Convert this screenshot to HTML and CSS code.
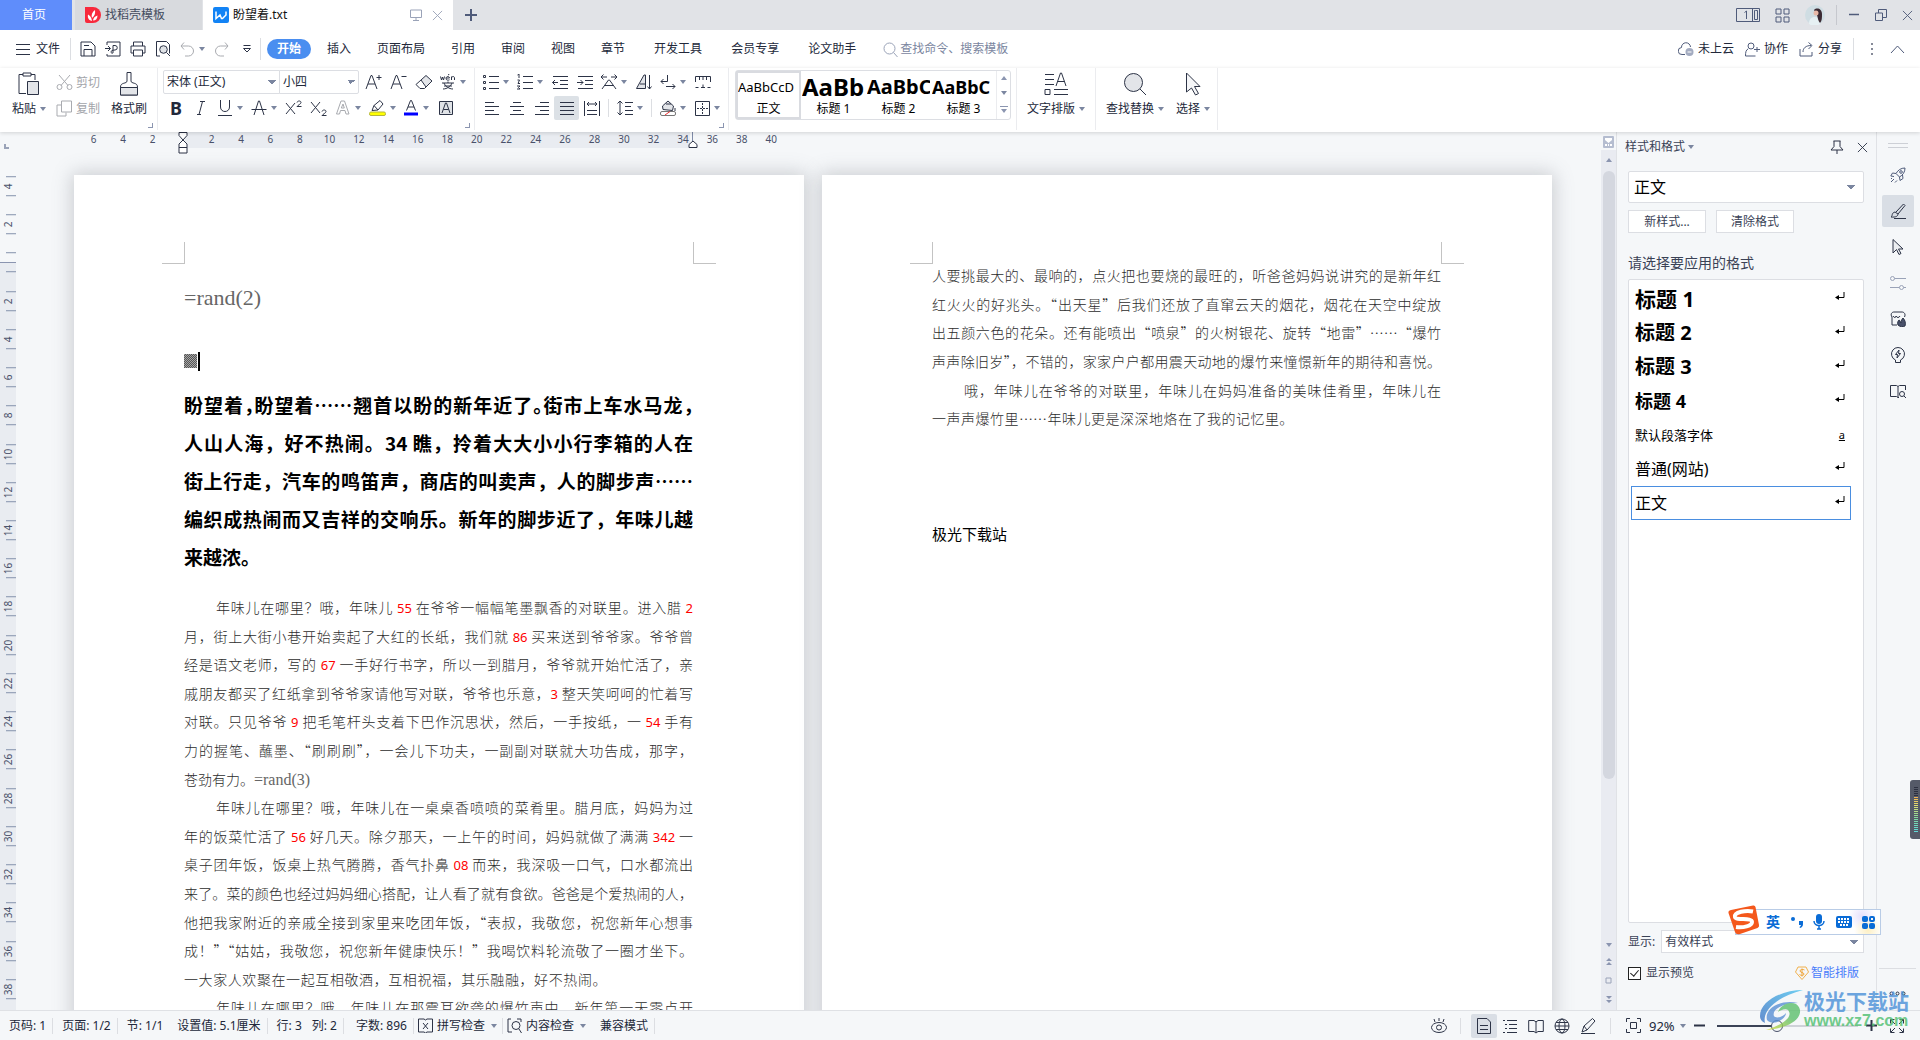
FILE: index.html
```html
<!DOCTYPE html>
<html lang="zh-CN">
<head>
<meta charset="utf-8">
<title>盼望着.txt</title>
<link rel="stylesheet" href="styles.css">
</head>
<body>
<svg class="defs" aria-hidden="true">
  <symbol id="i-close" viewBox="0 0 12 12"><path d="M1 1l10 10M11 1L1 11"/></symbol>
  <symbol id="i-arrow" viewBox="0 0 16 16"><path d="M3 .5v13.500l3.500-3.500 2.500 5 2-1-2.500-4.500H13z" fill="#eceef1"/></symbol>
  <symbol id="i-enter" viewBox="0 0 10 8"><path d="M9 0v5.500H2" /><path d="M4 3L0 5.500 4 8z" fill="#000" stroke="none"/></symbol>
  <symbol id="i-book" viewBox="0 0 16 16"><path d="M8 3v11M.7 2.500H6L8 4l2-1.500h5.300v11H10L8 15l-2-1.500H.7z"/></symbol>
</svg>
<div class="app">
  <header class="titlebar">
    <button class="tab home">首页</button>
    <button class="tab template">
      <svg width="16" height="16" viewBox="0 0 16 16"><path d="M0 0h8a8 8 0 0 1 0 16H2a2 2 0 0 1-2-2z" fill="#f8293c"/><path d="M7 14c-4-1-4.500-4-4-6.500C5 8.500 6.500 10 7 14zM7 11c-1-3 0-6 3-8 .5 3-.2 6-3 8zM8 13.500c.3-2.500 2-4.500 4.500-5 0 3-1.500 5-4.500 5z" fill="#fff"/></svg>
      找稻壳模板</button>
    <button class="tab doc">
      <svg width="16" height="16" viewBox="0 0 16 16"><rect width="16" height="16" rx="2" fill="#1283f5"/><path d="M3 4.500v7l4-3.500 1.500 3.500h1L13 8V4.500" fill="none" stroke="#fff" stroke-width="1.500"/></svg>
      <span class="tab-name">盼望着.txt</span>
      <svg class="ico pale" width="12" height="12" viewBox="0 0 12 12"><path d="M.5 1h11v7.500H.5zM6 8.500V11M3 11.500h6"/></svg>
      <svg class="ico pale" width="11" height="11"><use href="#i-close"/></svg>
    </button>
    <button class="newtab" aria-label="新建"><svg class="ico" width="12" height="12" viewBox="0 0 12 12"><path d="M6 0v12M0 6h12" stroke-width="2"/></svg></button>
    <div class="window-tools">
      <svg class="ico slate" width="24" height="14" viewBox="0 0 24 14"><path d="M.5.5h23v13H.5zM16.500.5v13M19.500 2.500h-1v9h3v-9zM8.500 4.500l2-1.500v8"/></svg>
      <svg class="ico slate" width="15" height="15" viewBox="0 0 15 15"><path d="M1 1h5v5H1zM9 1h5v5H9zM1 9h5v5H1zM9 9h5v5H9z"/></svg>
      <svg width="20" height="20" viewBox="0 0 20 20"><circle cx="10" cy="10" r="10" fill="#cfdde3"/><path d="M4 19c0-6 3-7 6-7s5 2 5 7a10 10 0 0 1-11 0z" fill="#e6f0f3"/><path d="M9 5c3-3 8-1 8 4 0 4 0 7-2 9-2-2-2-5-3-8z" fill="#3b2a33"/><circle cx="11" cy="8" r="2.500" fill="#e8b9a8"/></svg>
      <i class="vline"></i>
      <svg class="ico slate" width="12" height="12" viewBox="0 0 12 12"><path d="M1 5.500h10" stroke-width="1.500"/></svg>
      <svg class="ico slate" width="12" height="12" viewBox="0 0 12 12"><path d="M.5 4h7v7.500h-7zM3.500 4V.5h8v8h-4"/></svg>
      <svg class="ico slate" width="11" height="11"><use href="#i-close"/></svg>
    </div>
  </header>

  <nav class="menubar">
    <button class="file"><svg class="ico" width="14" height="11" viewBox="0 0 14 11"><path d="M0 .5h14M0 5.500h14M0 10.500h14"/></svg>文件</button>
    <i class="vline"></i>
    <div class="quick">
      <button class="tool" aria-label="保存"><svg class="ico" width="16" height="16" viewBox="0 0 16 16"><path d="M1 1h10l4 4v10H1zM4 15V8.500h8V15M4 4.500h5"/></svg></button>
      <button class="tool" aria-label="输出为PDF"><svg class="ico" width="16" height="16" viewBox="0 0 16 16"><path d="M2 4V1h13v14H2v-2M0 7.500h5M3 5l2.500 2.500L3 10M8 12V4.500h2a2 2 0 0 1 0 4.500C7 9 6 10 6 11s1 1.500 2 1"/></svg></button>
      <button class="tool" aria-label="打印"><svg class="ico" width="16" height="16" viewBox="0 0 16 16"><path d="M3.500 5V1h9v4M3.500 12H1V5h14v7h-2.500M3.500 9h9v6h-9z"/></svg></button>
      <button class="tool" aria-label="打印预览"><svg class="ico" width="16" height="16" viewBox="0 0 16 16"><path d="M5 15H1.500V.5h10l3 3v9M11.500 11.500L15 15"/><circle cx="8.500" cy="8.500" r="3.800" fill="#e0e3e7"/></svg></button>
      <button class="tool wide off" aria-label="撤销"><svg class="ico" width="16" height="16" viewBox="0 0 16 16"><path d="M5 1.500L2 5l3 3.500M2 5h7.500a5 5 0 0 1 0 10H6"/></svg><b class="caret"></b></button>
      <button class="tool off" aria-label="恢复"><svg class="ico" width="16" height="16" viewBox="0 0 16 16"><path d="M11 1.500L14 5l-3 3.500M14 5H6.500a5 5 0 0 0 0 10H10"/></svg></button>
      <button class="tool" aria-label="更多"><svg class="ico" width="10" height="8" viewBox="0 0 10 8"><path d="M1.500 .5h7M1.500 3.500h7L5 7z"/></svg></button>
    </div>
    <i class="vline"></i>
    <div class="menu-tabs">
      <button class="current">开始</button><button>插入</button><button>页面布局</button><button>引用</button><button>审阅</button><button>视图</button><button>章节</button>
    </div>
    <div class="menu-tabs extra"><button>开发工具</button><button>会员专享</button><button>论文助手</button></div>
    <label class="search"><svg class="ico pale" width="15" height="15" viewBox="0 0 15 15"><circle cx="6.500" cy="6.500" r="5.500"/><path d="M10.500 10.500L14.500 15"/></svg><input type="text" placeholder="查找命令、搜索模板" aria-label="查找命令"></label>
    <div class="share">
      <button><svg class="ico slate" width="16" height="16" viewBox="0 0 16 16"><path d="M7 13.500H4a3.500 3.500 0 0 1-.5-7 4.500 4.500 0 0 1 9-.5"/><circle cx="11.500" cy="11" r="4" fill="#a3abc0" stroke="none"/><path d="M9.500 11h4" stroke="#fff"/></svg>未上云</button>
      <button><svg class="ico slate" width="15" height="15" viewBox="0 0 15 15"><circle cx="6" cy="4" r="3"/><path d="M3 7C1 8 .5 10 .5 14h10M9 7.500h6M12 5v5"/></svg>协作</button>
      <button><svg class="ico slate" width="15" height="15" viewBox="0 0 15 15"><path d="M1 7v7h12v-4M4 10c0-4 3-6.500 8-6.500M9.500.5L13 3.500 9.500 7"/></svg>分享</button>
      <i class="vline"></i>
      <svg width="3" height="12" viewBox="0 0 3 12"><path d="M0 0h2v2H0zM0 5h2v2H0zM0 10h2v2H0z" fill="#868a98"/></svg>
      <svg class="ico slate" width="15" height="9" viewBox="0 0 15 9"><path d="M1 8l6.500-7L14 8"/></svg>
    </div>
  </nav>

  <section class="ribbon">
    <div class="group clip">
      <button class="big"><svg class="ico" width="22" height="24" viewBox="0 0 22 24"><path d="M8 21.500H1V2.500h4M13 2.500h4V8M5 1h8v3H5z"/><path d="M9.500 9.500h11v13h-11z" fill="#e3e5e9"/></svg><span>粘贴<b class="caret"></b></span></button>
      <div class="stack off">
        <button><svg class="ico" width="17" height="17" viewBox="0 0 17 17"><path d="M3 1l9 10.500M14 1L5 11.500"/><circle cx="3.500" cy="13" r="2.500"/><circle cx="13.500" cy="13" r="2.500"/></svg>剪切</button>
        <button><svg class="ico" width="17" height="17" viewBox="0 0 17 17"><path d="M5.500 1h10v11h-10zM5 5H1v11h9v-3.500"/></svg>复制</button>
      </div>
      <button class="big"><svg class="ico" width="20" height="24" viewBox="0 0 20 24"><path d="M8 .5h4V9c0 3 6.500 1 6.500 6v8h-17v-8C1.500 10 8 12 8 9z"/><path d="M1.500 15.500h17v7.500h-17z" fill="#e3e5e9"/></svg><span>格式刷</span></button>
      <i class="corner"></i>
    </div>
    <div class="group font">
      <div class="tools">
        <select class="family" aria-label="字体"><option>宋体 (正文)</option></select><select class="size" aria-label="字号"><option>小四</option></select>
        <span class="combo-gap"></span>
        <button class="tool" aria-label="增大字号"><svg class="ico" width="17" height="16" viewBox="0 0 17 16"><path d="M1 15L6 1.500h1L12 15M3 10h7M11.500 3.500h5M14 1v5"/></svg></button>
        <button class="tool" aria-label="减小字号"><svg class="ico" width="17" height="16" viewBox="0 0 17 16"><path d="M1 15L6 1.500h1L12 15M3 10h7M11.500 2.500h5"/></svg></button>
        <button class="tool" aria-label="清除格式"><svg class="ico" width="18" height="16" viewBox="0 0 18 16"><path d="M6 6l5-4.500 6 5.500-6 6z" fill="#e3e5e9"/><path d="M6 6l-5 4.500 4 4h4.500L11 13"/></svg></button>
        <button class="tool wide" aria-label="拼音指南"><svg class="ico" width="16" height="16" viewBox="0 0 16 16"><path d="M.5 2.500l1 3.500 1-3 1 3 1-3.500M6 4h3.500c0-2-3.500-2-3.500.3 0 2 2 2.200 3.500 1.500M11.500 6V2.500M11.500 4c.3-2 3-2 3 0v2M8 1l1.500-1M2 9h12M8 7.500V9M4 9c1 3 5 6 9 6M12 9c-1 3-5 6-9 6M4 12h8"/></svg><b class="caret"></b></button>
      </div>
      <div class="tools">
        <button class="tool" aria-label="加粗"><svg width="16" height="18"><text x="2" y="16" class="g-bold">B</text></svg></button>
        <button class="tool" aria-label="倾斜"><svg class="ico" width="16" height="16" viewBox="0 0 16 16"><path d="M7 1.500h5M4 14.500h4M9.500 1.500l-3.500 13"/></svg></button>
        <button class="tool wide" aria-label="下划线"><svg class="ico" width="16" height="16" viewBox="0 0 16 16"><path d="M3.500 0v7c0 6 9 6 9 0V0M1 15.500h14"/></svg><b class="caret"></b></button>
        <button class="tool wide" aria-label="删除线"><svg class="ico" width="16" height="16" viewBox="0 0 16 16"><path d="M3 15L7.500 1h1L13 15M.5 9.500h15"/></svg><b class="caret"></b></button>
        <button class="tool" aria-label="上标"><svg class="ico" width="17" height="16" viewBox="0 0 17 16"><path d="M1 3l9 11M10 3L1 14M12 2.500c.5-2 4-2 4 0 0 1.500-3 2.500-4 4h4.500"/></svg></button>
        <button class="tool" aria-label="下标"><svg class="ico" width="17" height="16" viewBox="0 0 17 16"><path d="M1 2l9 11M10 2L1 13M12 11.500c.5-2 4-2 4 0 0 1.500-3 2.500-4 4h4.500"/></svg></button>
        <button class="tool wide off" aria-label="文字效果"><svg class="ico" width="16" height="16" viewBox="0 0 16 16"><path d="M1.500 14L6 1h3.500L14 14h-3l-1-3.500H5.500l-1 3.500zM6.300 8h3L8 4z"/></svg><b class="caret"></b></button>
        <button class="tool wide" aria-label="突出显示"><svg class="ico" width="17" height="16" viewBox="0 0 17 16"><path d="M3 10.500l2-5L11 .5l3 3.500-5 6zM5 5.500l4 4.500"/><rect x=".5" y="12" width="16" height="3.500" rx="1.500" fill="#ff0" stroke="#b5b53c"/></svg><b class="caret"></b></button>
        <button class="tool wide" aria-label="字体颜色"><svg class="ico" width="16" height="16" viewBox="0 0 16 16"><path d="M3.500 10.500L7.500.5h1l4 10M5 7h6"/><path d="M1 14h14" stroke="#00f" stroke-width="3"/></svg><b class="caret"></b></button>
        <button class="tool" aria-label="字符底纹"><svg class="ico" width="16" height="16" viewBox="0 0 16 16"><path d="M1.500 1.500h13v13h-13z" fill="#e0e3e7"/><path d="M4 13l3.500-10h1L12 13M5.500 9.500h5"/></svg></button>
      </div>
      <i class="corner"></i>
    </div>
    <div class="group para">
      <div class="tools">
        <button class="tool wide" aria-label="项目符号"><svg class="ico" width="16" height="16" viewBox="0 0 16 16"><path d="M6 2.500h10M6 8.500h10M6 14.500h10M.5 1.500h2v2h-2zM.5 7.500h2v2h-2zM.5 13.500h2v2h-2z"/></svg><b class="caret"></b></button>
        <button class="tool wide" aria-label="编号"><svg class="ico" width="16" height="16" viewBox="0 0 16 16"><path d="M6 2.500h10M6 8.500h10M6 14.500h10M.5 1L2 0v4M.5 6h2L1 9.500h2M0 12h3l-1.500 1.500L3 15H0"/></svg><b class="caret"></b></button>
        <button class="tool" aria-label="减少缩进"><svg class="ico" width="16" height="16" viewBox="0 0 16 16"><path d="M1 2.500h15M8 6.500h8M8 10.500h8M1 14.500h15M.5 8.500H6M3 6L.5 8.500 3 11"/></svg></button>
        <button class="tool" aria-label="增加缩进"><svg class="ico" width="16" height="16" viewBox="0 0 16 16"><path d="M1 2.500h15M8 6.500h8M8 10.500h8M1 14.500h15M0 8.500h6M3.500 6L6 8.500 3.500 11"/></svg></button>
        <button class="tool wide" aria-label="字符缩放"><svg class="ico" width="16" height="16" viewBox="0 0 16 16"><path d="M1 15l6.500-9h1L15 15M4 11.500h8M0 3h6M2.500.5L0 3l2.500 2.500M10 3h6M13.500.5L16 3l-2.500 2.500"/></svg><b class="caret"></b></button>
        <button class="tool" aria-label="排序"><svg class="ico" width="16" height="16" viewBox="0 0 16 16"><path d="M.5 14.500L8 1h1.500v13.500zM4 10h5" fill="#e3e5e9"/><path d="M13.500 1v14M11.500 12.500l2 2.500 2-2.500"/></svg></button>
        <button class="tool wide" aria-label="段落标记"><svg class="ico" width="16" height="16" viewBox="0 0 16 16"><path d="M7.500 1v6.500H1M3.500 5L1 7.500 3.500 10M6 12.500h9M12.500 10l2.500 2.500-2.500 2.500"/></svg><b class="caret"></b></button>
        <button class="tool" aria-label="制表位"><svg class="ico" width="16" height="16" viewBox="0 0 16 16"><path d="M.5 8V2.500h15V8M4.500 3v3M8 3v3M11.500 3v3M.5 13.500h3M12.500 13.500h3M6 13.500h4M8 10.500v3"/></svg></button>
      </div>
      <div class="tools">
        <button class="tool" aria-label="左对齐"><svg class="ico" width="16" height="16" viewBox="0 0 16 16"><path d="M1 2.500h9M1 6.500h14M1 10.500h9M1 14.500h14"/></svg></button>
        <button class="tool" aria-label="居中"><svg class="ico" width="16" height="16" viewBox="0 0 16 16"><path d="M4 2.500h8M1 6.500h14M4 10.500h8M1 14.500h14"/></svg></button>
        <button class="tool" aria-label="右对齐"><svg class="ico" width="16" height="16" viewBox="0 0 16 16"><path d="M6 2.500h9M1 6.500h14M6 10.500h9M1 14.500h14"/></svg></button>
        <button class="tool pressed" aria-label="两端对齐"><svg class="ico" width="16" height="16" viewBox="0 0 16 16"><path d="M1 2.500h14M1 6.500h14M1 10.500h14M1 14.500h14"/></svg></button>
        <button class="tool" aria-label="分散对齐"><svg class="ico" width="16" height="16" viewBox="0 0 16 16"><path d="M.5 1v15M15.500 1v15M3 10.500h10M3 14.500h10M3 4h10M5 2L3 4l2 2M11 2l2 2-2 2"/></svg></button>
        <i class="mini"></i>
        <button class="tool wide" aria-label="行距"><svg class="ico" width="16" height="16" viewBox="0 0 16 16"><path d="M3 1v14M.5 3.500L3 1l2.500 2.500M.5 12.500L3 15l2.500-2.500M8 2.500h8M8 6.500h6M8 10.500h8M8 14.500h8"/></svg><b class="caret"></b></button>
        <i class="mini"></i>
        <button class="tool wide" aria-label="底纹颜色"><svg class="ico" width="16" height="16" viewBox="0 0 16 16"><path d="M3 9.500L2.500 6 8 1l5.500 5-1 4.500zM6 4h5" fill="#e3e5e9"/><path d="M15 8v3"/><rect x=".5" y="11.500" width="15" height="4" rx="1.500" stroke="#777"/><path d="M5 15l5-3.500" stroke="#e33"/></svg><b class="caret"></b></button>
        <button class="tool wide" aria-label="边框"><svg class="ico" width="16" height="16" viewBox="0 0 16 16"><path d="M1.500 1.500h14v14h-14z"/><path d="M8.500 3v11M3 8.500h11" stroke-dasharray="2 1"/></svg><b class="caret"></b></button>
      </div>
      <i class="corner"></i>
    </div>
    <div class="group gallery-group">
      <div class="gallery">
        <button class="sample chosen"><span class="s0">AaBbCcD</span><small>正文</small></button>
        <button class="sample"><span class="s1">AaBb</span><small>标题 1</small></button>
        <button class="sample"><span class="s2">AaBbC</span><small>标题 2</small></button>
        <button class="sample"><span class="s3">AaBbC</span><small>标题 3</small></button>
        <div class="scroller"><b class="caret up"></b><b class="caret"></b><svg class="nav" width="8" height="8" viewBox="0 0 8 8"><path d="M0 0h8v1H0zM1 3h6L4 7z"/></svg></div>
      </div>
    </div>
    <div class="group layout">
      <button class="big"><svg class="ico" width="24" height="24" viewBox="0 0 24 24"><path d="M1 2.500h9M1 7.500h9M1 12.500h9M1 17.500h5v5H1zM10 17.500h14M10 22.500h14M12 14l4.500-13h1L22 14M13.500 9.500h7"/></svg><span>文字排版<b class="caret"></b></span></button>
    </div>
    <div class="group find">
      <button class="big"><svg class="ico" width="24" height="24" viewBox="0 0 24 24"><circle cx="10.500" cy="10.500" r="9" fill="#e3e5e9"/><path d="M17 17l6 6"/></svg><span>查找替换<b class="caret"></b></span></button>
      <button class="big"><svg class="ico" width="24" height="24" viewBox="0 0 24 24"><path d="M5.500 1v19l5-4 4 7 3-1.500-4-7H19z" fill="#f5f6f8"/></svg><span>选择<b class="caret"></b></span></button>
    </div>
  </section>

  <main class="main">
    <div class="workspace">
      <div class="hruler">
        <div class="hnums"><span>6</span><span>4</span><span>2</span><span></span><span>2</span><span>4</span><span>6</span><span>8</span><span>10</span><span>12</span><span>14</span><span>16</span><span>18</span><span>20</span><span>22</span><span>24</span><span>26</span><span>28</span><span>30</span><span>32</span><span>34</span><span>36</span><span>38</span><span>40</span></div>
        <i class="tabstop"></i>
        <svg class="ico mark-left" width="10" height="22" viewBox="0 0 10 22"><path d="M1 .5h8v3L5 8 1 3.500zM5 8l4 4v9H1v-9zM1 15.500h8" fill="#fff"/></svg>
        <svg class="ico mark-right" width="10" height="16" viewBox="0 0 10 16"><path d="M4.500 0v9" stroke="#7f8ba8"/><path d="M5 9l4 3.500v3H1v-3z" fill="#fff"/></svg>
      </div>
      <div class="canvas-row">
        <div class="vruler"><div class="vnums"><span>4</span><span>2</span><span></span><span>2</span><span>4</span><span>6</span><span>8</span><span>10</span><span>12</span><span>14</span><span>16</span><span>18</span><span>20</span><span>22</span><span>24</span><span>26</span><span>28</span><span>30</span><span>32</span><span>34</span><span>36</span><span>38</span></div></div>
        <div class="canvas">
          <article class="page">
            <i class="crop crop-l"></i><i class="crop crop-r"></i>
            <p class="formula">=rand(2)</p>
            <p class="field"><i class="shade"></i><i class="cursor"></i></p>
            <h1 class="lead">
              <span class="line">盼望着<em>，</em>盼望着……翘首以盼的新年近了<em>。</em>街市上车水马龙<em>，</em></span>
              <span class="line">人山人海，好不热闹。34 瞧，拎着大大小小行李箱的人在</span>
              <span class="line">街上行走，汽车的鸣笛声，商店的叫卖声，人的脚步声……</span>
              <span class="line">编织成热闹而又吉祥的交响乐。新年的脚步近了，年味儿越</span>
              <span class="line natural">来越浓。</span>
            </h1>
            <div class="copy rows-15">
              <span class="line indent">年味儿在哪里？哦，年味儿 <b>55</b> 在爷爷一幅幅笔墨飘香的对联里。进入腊 <b>2</b></span>
              <span class="line">月，街上大街小巷开始卖起了大红的长纸，我们就 <b>86</b> 买来送到爷爷家。爷爷曾</span>
              <span class="line">经是语文老师，写的 <b>67</b> 一手好行书字，所以一到腊月，爷爷就开始忙活了，亲</span>
              <span class="line">戚朋友都买了红纸拿到爷爷家请他写对联，爷爷也乐意，<b>3</b> 整天笑呵呵的忙着写</span>
              <span class="line">对联。只见爷爷 <b>9</b> 把毛笔杆头支着下巴作沉思状，然后，一手按纸，一 <b>54</b> 手有</span>
              <span class="line">力的握笔、蘸墨、“刷刷刷”，一会儿下功夫，一副副对联就大功告成，那字，</span>
              <span class="line natural">苍劲有力。<code>=rand(3)</code></span>
              <span class="line indent">年味儿在哪里？哦，年味儿在一桌桌香喷喷的菜肴里。腊月底，妈妈为过</span>
              <span class="line">年的饭菜忙活了 <b>56</b> 好几天。除夕那天，一上午的时间，妈妈就做了满满 <b>342</b> 一</span>
              <span class="line">桌子团年饭，饭桌上热气腾腾，香气扑鼻 <b>08</b> 而来，我深吸一口气，口水都流出</span>
              <span class="line">来了。菜的颜色也经过妈妈细心搭配，让人看了就有食欲。爸爸是个爱热闹的人，</span>
              <span class="line">他把我家附近的亲戚全接到家里来吃团年饭，“表叔，我敬您，祝您新年心想事</span>
              <span class="line">成！”“姑姑，我敬您，祝您新年健康快乐！”我喝饮料轮流敬了一圈才坐下。</span>
              <span class="line part-83">一大家人欢聚在一起互相敬酒，互相祝福，其乐融融，好不热闹。</span>
              <span class="line indent">年味儿在哪里？哦，年味儿在那震耳欲聋的爆竹声中，新年第一天零点开</span>
            </div>
          </article>
          <article class="page">
            <i class="crop crop-l"></i><i class="crop crop-r"></i>
            <div class="copy rows-6">
              <span class="line">人要挑最大的、最响的，点火把也要烧的最旺的，听爸爸妈妈说讲究的是新年红</span>
              <span class="line">红火火的好兆头。“出天星”后我们还放了直窜云天的烟花，烟花在天空中绽放</span>
              <span class="line">出五颜六色的花朵。还有能喷出“喷泉”的火树银花、旋转“地雷”……“爆竹</span>
              <span class="line">声声除旧岁”，不错的，家家户户都用震天动地的爆竹来憧憬新年的期待和喜悦。</span>
              <span class="line indent">哦，年味儿在爷爷的对联里，年味儿在妈妈准备的美味佳肴里，年味儿在</span>
              <span class="line part-71">一声声爆竹里……年味儿更是深深地烙在了我的记忆里。</span>
            </div>
            <p class="site">极光下载站</p>
          </article>
        </div>
      </div>
    </div>

    <div class="scrollbar">
      <svg width="11" height="12" viewBox="0 0 11 12"><rect width="11" height="12" rx="1" fill="#b5bdd0"/><path d="M2 2h7v2L5.500 7 2 4zM2 8h2v2H2zM5 8h1v2H5zM7 8h2v2H7z" fill="#fff"/></svg>
      <div class="track"><b class="caret up"></b><i class="thumb"></i><b class="caret"></b>
        <svg class="nav" width="8" height="8" viewBox="0 0 8 8"><path d="M4 0l3 3H1zM4 4l3 3H1z"/></svg>
        <svg class="ico pale" width="7" height="7" viewBox="0 0 7 7"><path d="M1 1h5v5H1z"/></svg>
        <svg class="nav" width="8" height="8" viewBox="0 0 8 8"><path d="M1 1h6L4 4zM1 5h6L4 8z"/></svg>
      </div>
    </div>

    <aside class="panel">
      <header><span>样式和格式<b class="caret"></b></span>
        <svg class="ico" width="14" height="14" viewBox="0 0 14 14"><path d="M3.500 1h7M4 1v5.500L1 10h12l-3-3.500V1M7 10v4"/></svg>
        <svg class="ico" width="11" height="11"><use href="#i-close"/></svg>
      </header>
      <select class="style-select" aria-label="当前样式"><option>正文</option></select>
      <div class="panel-buttons"><button>新样式...</button><button>清除格式</button></div>
      <h2>请选择要应用的格式</h2>
      <ul class="styles">
        <li class="t1">标题 1<svg class="ico black" width="10" height="8"><use href="#i-enter"/></svg></li>
        <li class="t2">标题 2<svg class="ico black" width="10" height="8"><use href="#i-enter"/></svg></li>
        <li class="t2">标题 3<svg class="ico black" width="10" height="8"><use href="#i-enter"/></svg></li>
        <li class="t4">标题 4<svg class="ico black" width="10" height="8"><use href="#i-enter"/></svg></li>
        <li class="t5">默认段落字体<u>a</u></li>
        <li>普通(网站)<svg class="ico black" width="10" height="8"><use href="#i-enter"/></svg></li>
        <li class="active">正文<svg class="ico black" width="10" height="8"><use href="#i-enter"/></svg></li>
      </ul>
      <div class="show"><label for="show">显示:</label><select id="show"><option>有效样式</option></select></div>
      <div class="preview"><label><input type="checkbox" checked>显示预览</label>
        <a href="#"><svg width="14" height="14" viewBox="0 0 14 14"><path d="M3 1h8l2.500 5L7 13.500.5 6z" fill="none" stroke="#f0b04c"/><path d="M9.500 4C8 3 5 3.200 5 5s4 1.200 4 3-3 1.800-4.500.5M7 2.500v8" fill="none" stroke="#f0a63c"/></svg>智能排版</a></div>
    </aside>

    <div class="sidebar">
      <i class="grip"></i>
      <button aria-label="快捷"><svg class="ico slate" width="16" height="16" viewBox="0 0 16 16"><path d="M15 1c-4 0-7 2-9 5.500L9.500 10C13 8 15 5 15 1zM6 6.500L2.500 6 .8 9l3.200.5M9.500 10l.5 3.500 3-2L12.500 8M1 15l3-3M5 15.500l2-2M1 12l1-1"/><circle cx="11" cy="5" r="1.300"/></svg></button>
      <button class="on" aria-label="样式"><svg class="ico" width="16" height="16" viewBox="0 0 16 16"><path d="M6 9l7.500-8L15 2.500 8 11M1 14c2-1 0-4 4-5l3 2c0 2-2 3.500-7 3zM4 15.500h12"/></svg></button>
      <button aria-label="选择"><svg class="ico" width="16" height="16"><use href="#i-arrow"/></svg></button>
      <button aria-label="属性"><svg class="ico pale" width="16" height="16" viewBox="0 0 16 16"><circle cx="2.500" cy="3.500" r="2"/><circle cx="11.500" cy="12.500" r="2"/><path d="M4.500 3.500H16M0 12.500h9.500M13.500 12.500H16"/></svg></button>
      <button aria-label="分析"><svg class="ico" width="16" height="16" viewBox="0 0 16 16"><path d="M2 6C0 3 2 1 4 1h8c2 0 4 2 2.500 5M2 6v8h5M3 5c1 2 3 2 3 0 1 2 3 2 4 0"/><path d="M8 14c-1-2 0-4 1-5 1 0 1 2 2 3 0-2 1-4 2-5 2 2 3 5 2 8-2 1-5 1-7-1z" fill="#49516a"/></svg></button>
      <button aria-label="助手"><svg class="ico" width="16" height="16" viewBox="0 0 16 16"><path d="M5.500 15.500V13a6.500 6.500 0 1 1 5 0v2.500zM9 3L5.500 7.500h2L7 11l3.500-4.500h-2z"/></svg></button>
      <button aria-label="查阅"><svg class="ico" width="16" height="16" viewBox="0 0 16 16"><path d="M8 3.500v11M9 14.500H8L6.500 13.500H.5V2.500h6L8 3.500l1.500-1h6V7"/><circle cx="12" cy="11" r="2.500"/><path d="M14 13l2 2"/></svg></button>
      <i class="rule"></i>
      <svg class="ico more" width="17" height="5" viewBox="0 0 17 5"><circle cx="2.500" cy="2.500" r="1.500"/><circle cx="8.500" cy="2.500" r="1.500"/><circle cx="14.500" cy="2.500" r="1.500"/></svg>
    </div>
  </main>

  <footer class="status">
    <span class="cell">页码: 1</span><span class="cell">页面: 1/2</span><span class="cell pair">节: 1/1<span>设置值: 5.1厘米</span></span><span class="cell pair near">行: 3<span>列: 2</span></span><span class="cell count">字数: 896</span>
    <button class="check"><svg class="ico" width="15" height="15" viewBox="0 0 15 15"><path d="M3 1H.5v13H6l1.500 1L9 14h5.500V1H12M3 1h3l1.500 1L9 1h3M5 5l5 6M10 5l-5 6"/></svg>拼写检查<b class="caret"></b></button>
    <button class="check last"><svg class="ico" width="15" height="15" viewBox="0 0 15 15"><path d="M4 1H1v13h4M10 1h4v3"/><circle cx="9" cy="7.500" r="4"/><path d="M12 11l2.500 4"/></svg>内容检查<b class="caret"></b></button>
    <span class="cell mode">兼容模式</span>
    <div class="views">
      <svg class="ico" width="16" height="16" viewBox="0 0 16 16"><ellipse cx="8" cy="9.500" rx="7.500" ry="5"/><circle cx="8" cy="9.500" r="2.500"/><path d="M8 0v3M3 1l1 3M13 1l-1 3"/></svg>
      <i class="vline"></i>
      <button class="on" aria-label="页面"><svg class="ico" width="16" height="16" viewBox="0 0 16 16"><path d="M1.500.5H11l3.500 3.500v11.500h-13zM4 7.500h8M4 11.500h8"/></svg></button>
      <button aria-label="大纲"><svg class="ico" width="16" height="16" viewBox="0 0 16 16"><path d="M1 2.500h2M5 2.500h10M3 6.500h2M7 6.500h8M3 10.500h2M7 10.500h8M1 14.500h2M5 14.500h10"/></svg></button>
      <button aria-label="阅读"><svg class="ico" width="16" height="16"><use href="#i-book"/></svg></button>
      <button aria-label="Web"><svg class="ico" width="16" height="16" viewBox="0 0 16 16"><circle cx="8" cy="8" r="7"/><ellipse cx="8" cy="8" rx="3" ry="7"/><path d="M1 8h14M2 4.500h12M2 11.500h12"/></svg></button>
      <button aria-label="书写"><svg class="ico" width="17" height="16" viewBox="0 0 17 16"><path d="M2 14l2-6 8.500-7.500L15 3 7 12zM4 8l3 4M1 15.500h14"/></svg></button>
      <i class="vline end"></i>
    </div>
    <div class="zoom">
      <svg class="ico" width="15" height="15" viewBox="0 0 15 15"><path d="M4.500 4.500h6v6h-6zM.5 4V.5H4M11 .5h3.500V4M14.500 11v3.500H11M4 14.500H.5V11"/></svg>
      <span class="pct">92%<b class="caret"></b></span>
      <button aria-label="缩小"><svg class="ico" width="11" height="11" viewBox="0 0 11 11"><path d="M0 5.500h11" stroke-width="2"/></svg></button>
      <input type="range" min="0" max="100" value="42" aria-label="缩放">
      <button aria-label="放大"><svg class="ico" width="11" height="11" viewBox="0 0 11 11"><path d="M0 5.500h11M5.500 0v11" stroke-width="2"/></svg></button>
      <svg class="ico" width="14" height="14" viewBox="0 0 14 14"><path d="M.5 4.500v-4h4M9.500.5h4v4M13.500 9.500v4h-4M4.500 13.500h-4v-4M1 1l4 4M13 1L9 5M13 13L9 9M1 13l4-4"/></svg>
    </div>
  </footer>

  <div class="ime">
    <svg class="sogou" width="32" height="30" viewBox="0 0 32 30"><path d="M3 5L25 .5q2-.5 2.500 1.500L31 20q.5 2-1.500 3L12 29q-4 1-5-2L.5 8Q0 5.500 3 5z" fill="#f4581c"/><path d="M25 6.500C18 5 6 7 7 12c1 4 17 0 17 5 0 4-9 6-16 5" fill="none" stroke="#fff" stroke-width="4"/></svg>
    <b>英</b>
    <svg width="12" height="12" viewBox="0 0 12 12"><circle cx="2" cy="3" r="2"/><path d="M8 5h4v3q0 3-3 4l-.5-1Q10 10 10 9H8z"/></svg>
    <svg width="12" height="16" viewBox="0 0 12 16"><rect x="3" width="6" height="10" rx="3"/><path d="M1 7c0 6 10 6 10 0M6 12v3M4 15h4" fill="none" stroke="#0a6cd6" stroke-width="1.500"/></svg>
    <svg width="16" height="12" viewBox="0 0 16 12"><rect width="16" height="12" rx="2"/><path d="M2 3h12M2 6h12M4 9h8" stroke="#fff" stroke-width="2" stroke-dasharray="2 1"/></svg>
    <svg width="13" height="13" viewBox="0 0 13 13"><rect width="6" height="6" rx="2"/><rect y="7" width="6" height="6" rx="2"/><rect x="7" y="7" width="6" height="6" rx="2"/><rect x="8" y="1" width="4" height="4" rx="1" fill="none" stroke="#0a6cd6" stroke-width="2"/></svg>
  </div>
  <div class="meter"><i></i></div>
  <div class="brand">
    <svg width="44" height="42" viewBox="0 0 44 42"><defs><linearGradient id="b1" x1="0" y1="1" x2="1" y2="0"><stop offset="0" stop-color="#3f74c4"/><stop offset="1" stop-color="#4cc3f0"/></linearGradient><linearGradient id="b2" x1="0" y1="1" x2="1" y2="0"><stop offset="0" stop-color="#d8dc3c"/><stop offset=".6" stop-color="#5cbf6c"/></linearGradient></defs><path d="M43 1C22 1 0 12 0 27c0 4 3 6 5 7C2 22 16 8 43 1z" fill="url(#b1)"/><path d="M7 31C4 20 20 10 38 14 18 15 12 22 14 27c2 3 9 1 12-3 0 6-13 14-19 7z" fill="#5a90d4"/><path d="M36 15c9 6 5 23-30 26 16-5 28-13 22-20-2-2-8 0-10 2 2-6 10-11 18-8z" fill="url(#b2)"/></svg>
    <div><strong>极光下载站</strong><span>www.xz7.com</span></div>
  </div>
</div>
</body>
</html>
```
FILE: styles.css
```css
* { box-sizing: border-box; }
body { margin: 0; font: 12px/16px "Noto Sans", "Noto Sans CJK SC", sans-serif; color: #22283a; background: #f5f7f9; }
button { border: 0; padding: 0; background: none; font: inherit; color: inherit; display: flex; align-items: center; white-space: nowrap; }
p, h1, h2, ul { margin: 0; padding: 0; list-style: none; font-weight: 400; }
select { appearance: none; font: inherit; color: inherit; border: 1px solid #dcdee3; outline: 0; background: #fff conic-gradient(from -45deg at 50% 4px, #7b86a0 0 90deg, transparent 0) no-repeat right 3px center / 8px 4px; }
svg { flex: none; display: block; }
.defs { display: none; }
.app { position: relative; height: 100vh; display: flex; flex-direction: column; overflow: hidden; }
.ico { fill: none; stroke: #2c3346; stroke-width: 1; }
.slate { stroke: #4f5b7a; }
.pale { stroke: #9aa3b8; }
.black { stroke: #000; }
.off { color: #a3a5aa; }
.off .ico { stroke: #a9abb0; }
.caret { flex: none; display: inline-block; width: 0; height: 0; border: 3px solid transparent; border-top: 4px solid #7b86a0; border-bottom: 0; }
.caret.up { border-top: 0; border-bottom: 4px solid #8b95b0; }
.vline { flex: none; width: 1px; height: 22px; background: #dcdee2; }

.titlebar { flex: none; height: 30px; background: #e1e3e7; display: flex; }
.tab { gap: 4px; }
.home { width: 72px; background: #5f8dfb; color: #fff; justify-content: center; padding-right: 4px; margin-right: 3px; }
.template { width: 127px; background: #d8dade; color: #444c5e; padding-left: 10px; margin-right: 1px; }
.doc { width: 250px; background: #fff; padding: 0 10px; color: #111; }
.tab-name { flex: 1; text-align: left; }
.doc .pale { margin-left: 6px; }
.newtab { width: 36px; justify-content: center; }
.newtab .ico { stroke: #4f5b7a; }
.window-tools { margin-left: auto; display: flex; align-items: center; gap: 15px; padding-right: 7px; }
.window-tools .vline { height: 20px; background: #c6c8ce; margin: 0 -4px; }

.menubar { flex: none; height: 38px; background: #fff; display: flex; align-items: center; }
.file { width: 70px; padding-left: 16px; gap: 6px; }
.menubar .quick { display: flex; padding: 0 1px 0 4px; }
.tool { width: 25px; height: 24px; flex: none; justify-content: center; border-radius: 2px; }
.tool.wide { width: 34px; justify-content: flex-start; padding-left: 4px; gap: 4px; }
.tool.pressed { background: #dce1e6; }
.menu-tabs { display: flex; gap: 26px; align-items: center; padding-left: 6px; }
.menu-tabs .current { background: #4a8ef0; color: #fff; font-weight: 700; height: 20px; padding: 0 10px; border-radius: 10px; margin-right: -10px; }
.extra { gap: 29px; padding-left: 29px; }
.search { display: flex; align-items: center; gap: 2px; margin-left: 27px; }
.search input { width: 130px; border: 0; padding: 0; font: inherit; outline: 0; }
.search input::placeholder { color: #7b86a0; opacity: 1; }
.share { margin-left: auto; display: flex; align-items: center; gap: 11px; padding-right: 15px; }
.share button { gap: 4px; }
.share svg + svg { margin-left: 5px; }
.share > svg { margin-left: 6px; }

.ribbon { flex: none; height: 64px; background: #fff; display: flex; position: relative; z-index: 2; box-shadow: 0 1px 4px rgba(0, 0, 0, .15); }
.group { position: relative; height: 62px; border-right: 1px solid #ebecef; display: flex; }
.big { flex-direction: column; padding-top: 4px; gap: 5px; height: 52px; }
.big span { display: flex; align-items: center; gap: 4px; line-height: 16px; }
.clip { width: 158px; padding-left: 12px; gap: 11px; }
.stack { display: flex; flex-direction: column; gap: 9px; padding-top: 6px; margin-left: -1px; }
.stack button { gap: 3px; height: 17px; }
.corner { position: absolute; right: 4px; bottom: 2px; width: 5px; height: 5px; border: solid #8b95b0; border-width: 0 1px 1px 0; }
.font, .para { flex-direction: column; gap: 2px; padding-top: 2px; }
.font { width: 317px; padding-left: 5px; }
.para { width: 254px; padding-left: 4px; }
.tools { display: flex; align-items: center; height: 24px; }
.family, .size { height: 24px; padding: 0 0 0 3px; }
.family { width: 117px; border-radius: 2px 0 0 2px; }
.size { width: 80px; margin-left: -1px; border-radius: 0 2px 2px 0; }
.combo-gap { width: 2px; }
.g-bold { font: 700 18px "Noto Sans", sans-serif; fill: #22283a; }
.mini { width: 1px; height: 18px; margin: 0 4px; background: #dcdee2; }
.gallery-group { width: 288px; padding: 2px 0 0 6px; }
.gallery { width: 276px; height: 50px; border: 1px solid #dcdee3; border-radius: 3px; display: flex; }
.sample { flex: none; width: 65px; flex-direction: column; color: #000; border: 2px solid transparent; border-width: 2px 1px; }
.sample.chosen { border: 2px solid #d9dbe0; }
.sample span { width: 100%; height: 28px; line-height: 28px; overflow: hidden; text-align: left; font-weight: 700; }
.sample small { font-size: 12px; line-height: 16px; }
.sample .s0 { font-size: 13px; font-weight: 400; }
.sample .s1 { font-size: 24px; }
.sample .s2 { font-size: 20px; }
.sample .s3 { font-size: 18px; }
.scroller { flex: 1; border-left: 1px solid #ebecef; display: flex; flex-direction: column; align-items: center; justify-content: space-around; }
.layout { width: 79px; justify-content: center; }
.find { width: 122px; padding-left: 10px; gap: 12px; }

.main { flex: 1; min-height: 0; display: flex; }
.workspace { flex: 1; min-width: 0; display: flex; flex-direction: column; }
.hruler { position: relative; flex: none; height: 18px; background: linear-gradient(90deg, transparent 185px, #e9ecf1 185px, #e9ecf1 690px, transparent 690px) 0 0 / 100% 16px no-repeat; }
.hnums { width: 707px; margin-left: 79px; display: grid; grid-template-columns: repeat(24, 1fr); font-size: 10px; line-height: 15px; color: #49516a; text-align: center; }
.tabstop { position: absolute; left: 4px; top: 12px; width: 5px; height: 5px; border: solid #9aa3b8; border-width: 0 0 2px 2px; }
.mark-left { position: absolute; left: 178px; top: 0; }
.mark-right { position: absolute; left: 688px; top: 0; }
.canvas-row { flex: 1; min-height: 0; display: flex; overflow: hidden; }
.vruler { flex: none; width: 16px; padding-top: 17px; background: linear-gradient(#f5f7f9 112px, #8b95b0 112px, #8b95b0 113px, #e9ecf1 113px); }
.vnums { height: 841px; display: grid; grid-auto-rows: 1fr; }
.vnums span { writing-mode: vertical-rl; transform: rotate(180deg); text-align: center; line-height: 16px; font-size: 10px; color: #49516a; background: linear-gradient(#8492ac, #8492ac) 0 25% / 10px 1px no-repeat, linear-gradient(#8492ac, #8492ac) 0 75% / 10px 1px no-repeat; }
.canvas { flex: 1; min-width: 0; overflow: hidden; display: flex; align-items: flex-start; gap: 18px; padding: 25px 0 0 58px; }
.page { position: relative; flex: none; width: 730px; min-height: 1032px; background: #fff; padding: 86px 111px 0 110px; box-shadow: 0 0 18px 2px rgba(90, 95, 105, .28); }
.crop { position: absolute; top: 67px; width: 23px; height: 22px; border: 0 solid #c3c3c3; border-bottom-width: 1px; }
.crop-l { left: 88px; border-right-width: 1px; }
.crop-r { right: 88px; border-left-width: 1px; }
.formula { margin-top: 21px; font: 22px/32px "Liberation Serif", serif; color: #666; }
.field { display: flex; align-items: center; gap: 1px; height: 38px; margin: 28px 0 6px; }
.shade { width: 13px; height: 14px; background: repeating-conic-gradient(#555 0 25%, #a5a5a5 0 50%) 0 0 / 2px 2px; }
.cursor { width: 2px; height: 19px; background: #000; }
.line { display: block; white-space: nowrap; text-align: justify; text-align-last: justify; }
.natural { text-align-last: left; }
.indent { padding-left: 32px; }
.part-83 { width: 83%; }
.part-71 { width: 71%; }
.lead { font: 700 19px/38px "Noto Sans CJK SC", sans-serif; color: #000; margin-bottom: 17px; }
.lead em { font-style: normal; font-feature-settings: "halt"; }
.copy { display: grid; grid-auto-rows: 1fr; font: 300 14px/28px "Noto Sans CJK SC", sans-serif; color: #2c2c2c; }
.rows-15 { height: 429px; }
.rows-6 { height: 172px; }
.copy b { font: 13px "Noto Sans", sans-serif; color: #f00; }
.copy code { font: 16px "Liberation Serif", serif; color: #666; }
.site { margin-top: 87px; font: 15px/28px "Noto Sans CJK SC", sans-serif; color: #000; }

.scrollbar { flex: none; width: 15px; display: flex; flex-direction: column; align-items: center; padding-top: 4px; }
.track { flex: 1; width: 100%; margin-top: 2px; padding: 8px 0 7px; background: #e9ebf1; display: flex; flex-direction: column; align-items: center; gap: 11px; }
.track .caret { border-top-color: #8b95b0; }
.thumb { width: 12px; height: 608px; border-radius: 6px; background: #d4d7df; margin-top: -2px; margin-bottom: auto; }
.nav { fill: #8b95b0; }

.panel { flex: none; width: 261px; border: 1px solid #e0e2e6; border-width: 0 1px; padding: 0 12px 29px 11px; display: flex; flex-direction: column; color: #3a4256; }
.panel header { display: flex; align-items: center; gap: 13px; height: 30px; margin: 0 -4px 0 -3px; }
.panel header span { flex: 1; display: flex; align-items: center; gap: 3px; }
.style-select { flex: none; height: 32px; margin-top: 9px; padding-left: 5px; font-size: 16px; color: #000; border-radius: 2px; background-position: right 8px center; }
.panel-buttons { display: flex; gap: 10px; margin-top: 7px; }
.panel-buttons button { width: 78px; height: 23px; justify-content: center; border: 1px solid #dcdee3; background: #fff; }
.panel h2 { font-size: 14px; line-height: 20px; margin: 20px 0 6px; }
.styles { flex: 1; border: 1px solid #dcdee3; border-radius: 2px; background: #fff; padding: 2px 12px 0 2px; color: #000; }
.styles li { height: 34px; padding: 0 5px 0 3px; display: flex; justify-content: space-between; align-items: center; font-size: 16px; border: 1px solid transparent; }
.styles li svg { margin-bottom: 6px; }
.styles .active { border-color: #4a8ee0; }
.styles .t1, .styles .t2, .styles .t4 { font-weight: 700; font-size: 20px; word-spacing: normal; }
.styles .t1 { font-size: 21px; }
.styles .t4 { font-size: 18px; }
.styles .t5 { font-size: 13px; }
.styles u { font-size: 11px; }
.show { display: flex; align-items: center; gap: 6px; margin-top: 7px; }
.show select { flex: 1; height: 23px; padding-left: 3px; background-position: right 5px center; }
.preview { display: flex; justify-content: space-between; margin-top: 12px; padding-right: 5px; }
.preview label, .preview a { display: flex; align-items: center; gap: 5px; }
.preview a { color: #4a7dfb; text-decoration: none; gap: 2px; }
.preview input { appearance: none; width: 13px; height: 13px; margin: 0; border: 1px solid #222; background: #fff; position: relative; }
.preview input:checked::after { content: ""; position: absolute; left: 3px; top: 0; width: 4px; height: 7px; border: solid #222; border-width: 0 1px 1px 0; transform: rotate(40deg); }

.sidebar { flex: none; width: 43px; display: flex; flex-direction: column; align-items: center; padding: 11px 2px 14px 0; gap: 4px; }
.grip { width: 20px; height: 5px; border: solid #cdd0d6; border-width: 1px 0; margin-bottom: 7px; }
.sidebar button { width: 32px; height: 32px; justify-content: center; border-radius: 2px; }
.on { background: #d9dee5; }
.rule { width: 37px; height: 1px; background: #dcdee2; margin: auto 0 18px; }

.status { flex: none; height: 30px; border-top: 1px solid #dfe1e5; display: flex; align-items: center; color: #22283a; }
.cell { padding: 0 6px 0 9px; border-right: 1px solid #dcdee2; white-space: nowrap; }
.pair span { margin-left: 14px; }
.near span { margin-left: 10px; }
.count { padding-left: 12px; }
.check { padding: 0 5px 0 4px; gap: 4px; border-right: 1px solid #dcdee2; }
.check .caret { margin-left: 2px; }
.check.last { border-right: 0; }
.views { margin-left: auto; display: flex; align-items: center; }
.views button { width: 26px; height: 24px; justify-content: center; border-radius: 2px; }
.views .vline { height: 16px; margin: 0 10px 0 13px; }
.views .end { margin-left: 9px; }
.zoom { display: flex; align-items: center; width: 294px; padding-right: 16px; gap: 8px; margin-left: 5px; }
.pct { display: flex; align-items: center; gap: 5px; font-size: 13px; }
.zoom input { appearance: none; flex: 1; min-width: 0; height: 12px; margin: 0 0 0 4px; background: linear-gradient(90deg, #3a4256 42%, #cfd2d9 42%) 0 center / 100% 2px no-repeat; }
.zoom input::-webkit-slider-thumb { appearance: none; width: 12px; height: 12px; border-radius: 6px; border: 1px solid #49516a; background: #f5f7f9; }
.zoom > svg:last-child { margin-left: 5px; }

.ime { position: absolute; right: 39px; bottom: 105px; height: 26px; width: 146px; padding: 0 5px 0 30px; display: flex; align-items: center; justify-content: space-between; background: radial-gradient(circle at 132px 20px, #fdf0c4, transparent 14px), radial-gradient(circle at 126px 6px, #e6e0fb, transparent 14px), #fff; border: 1px solid #b9cce6; color: #0a6cd6; fill: #0a6cd6; font-size: 14px; }
.sogou { position: absolute; left: -8px; top: -5px; }
.meter { position: absolute; right: 0; top: 780px; width: 10px; height: 59px; background: #555a68; border-radius: 3px 0 0 3px; padding: 7px 2px 7px 4px; }
.meter i { display: block; height: 100%; background: repeating-linear-gradient(transparent 0 1px, #555a68 1px 2px), linear-gradient(#2c3040 20%, #f0b050 22%, #e4e070 40%, #7fd8a0 70%, #5fd8d8); }
.brand { position: absolute; right: 11px; bottom: 9px; display: flex; align-items: flex-end; opacity: .8; pointer-events: none; }
.brand div { display: flex; flex-direction: column; }
.brand strong { font: 700 21px/22px "Noto Sans CJK SC", sans-serif; color: #4a90d8; }
.brand span { font: 700 16px/20px "Liberation Sans", sans-serif; color: #4fc070; }
```
